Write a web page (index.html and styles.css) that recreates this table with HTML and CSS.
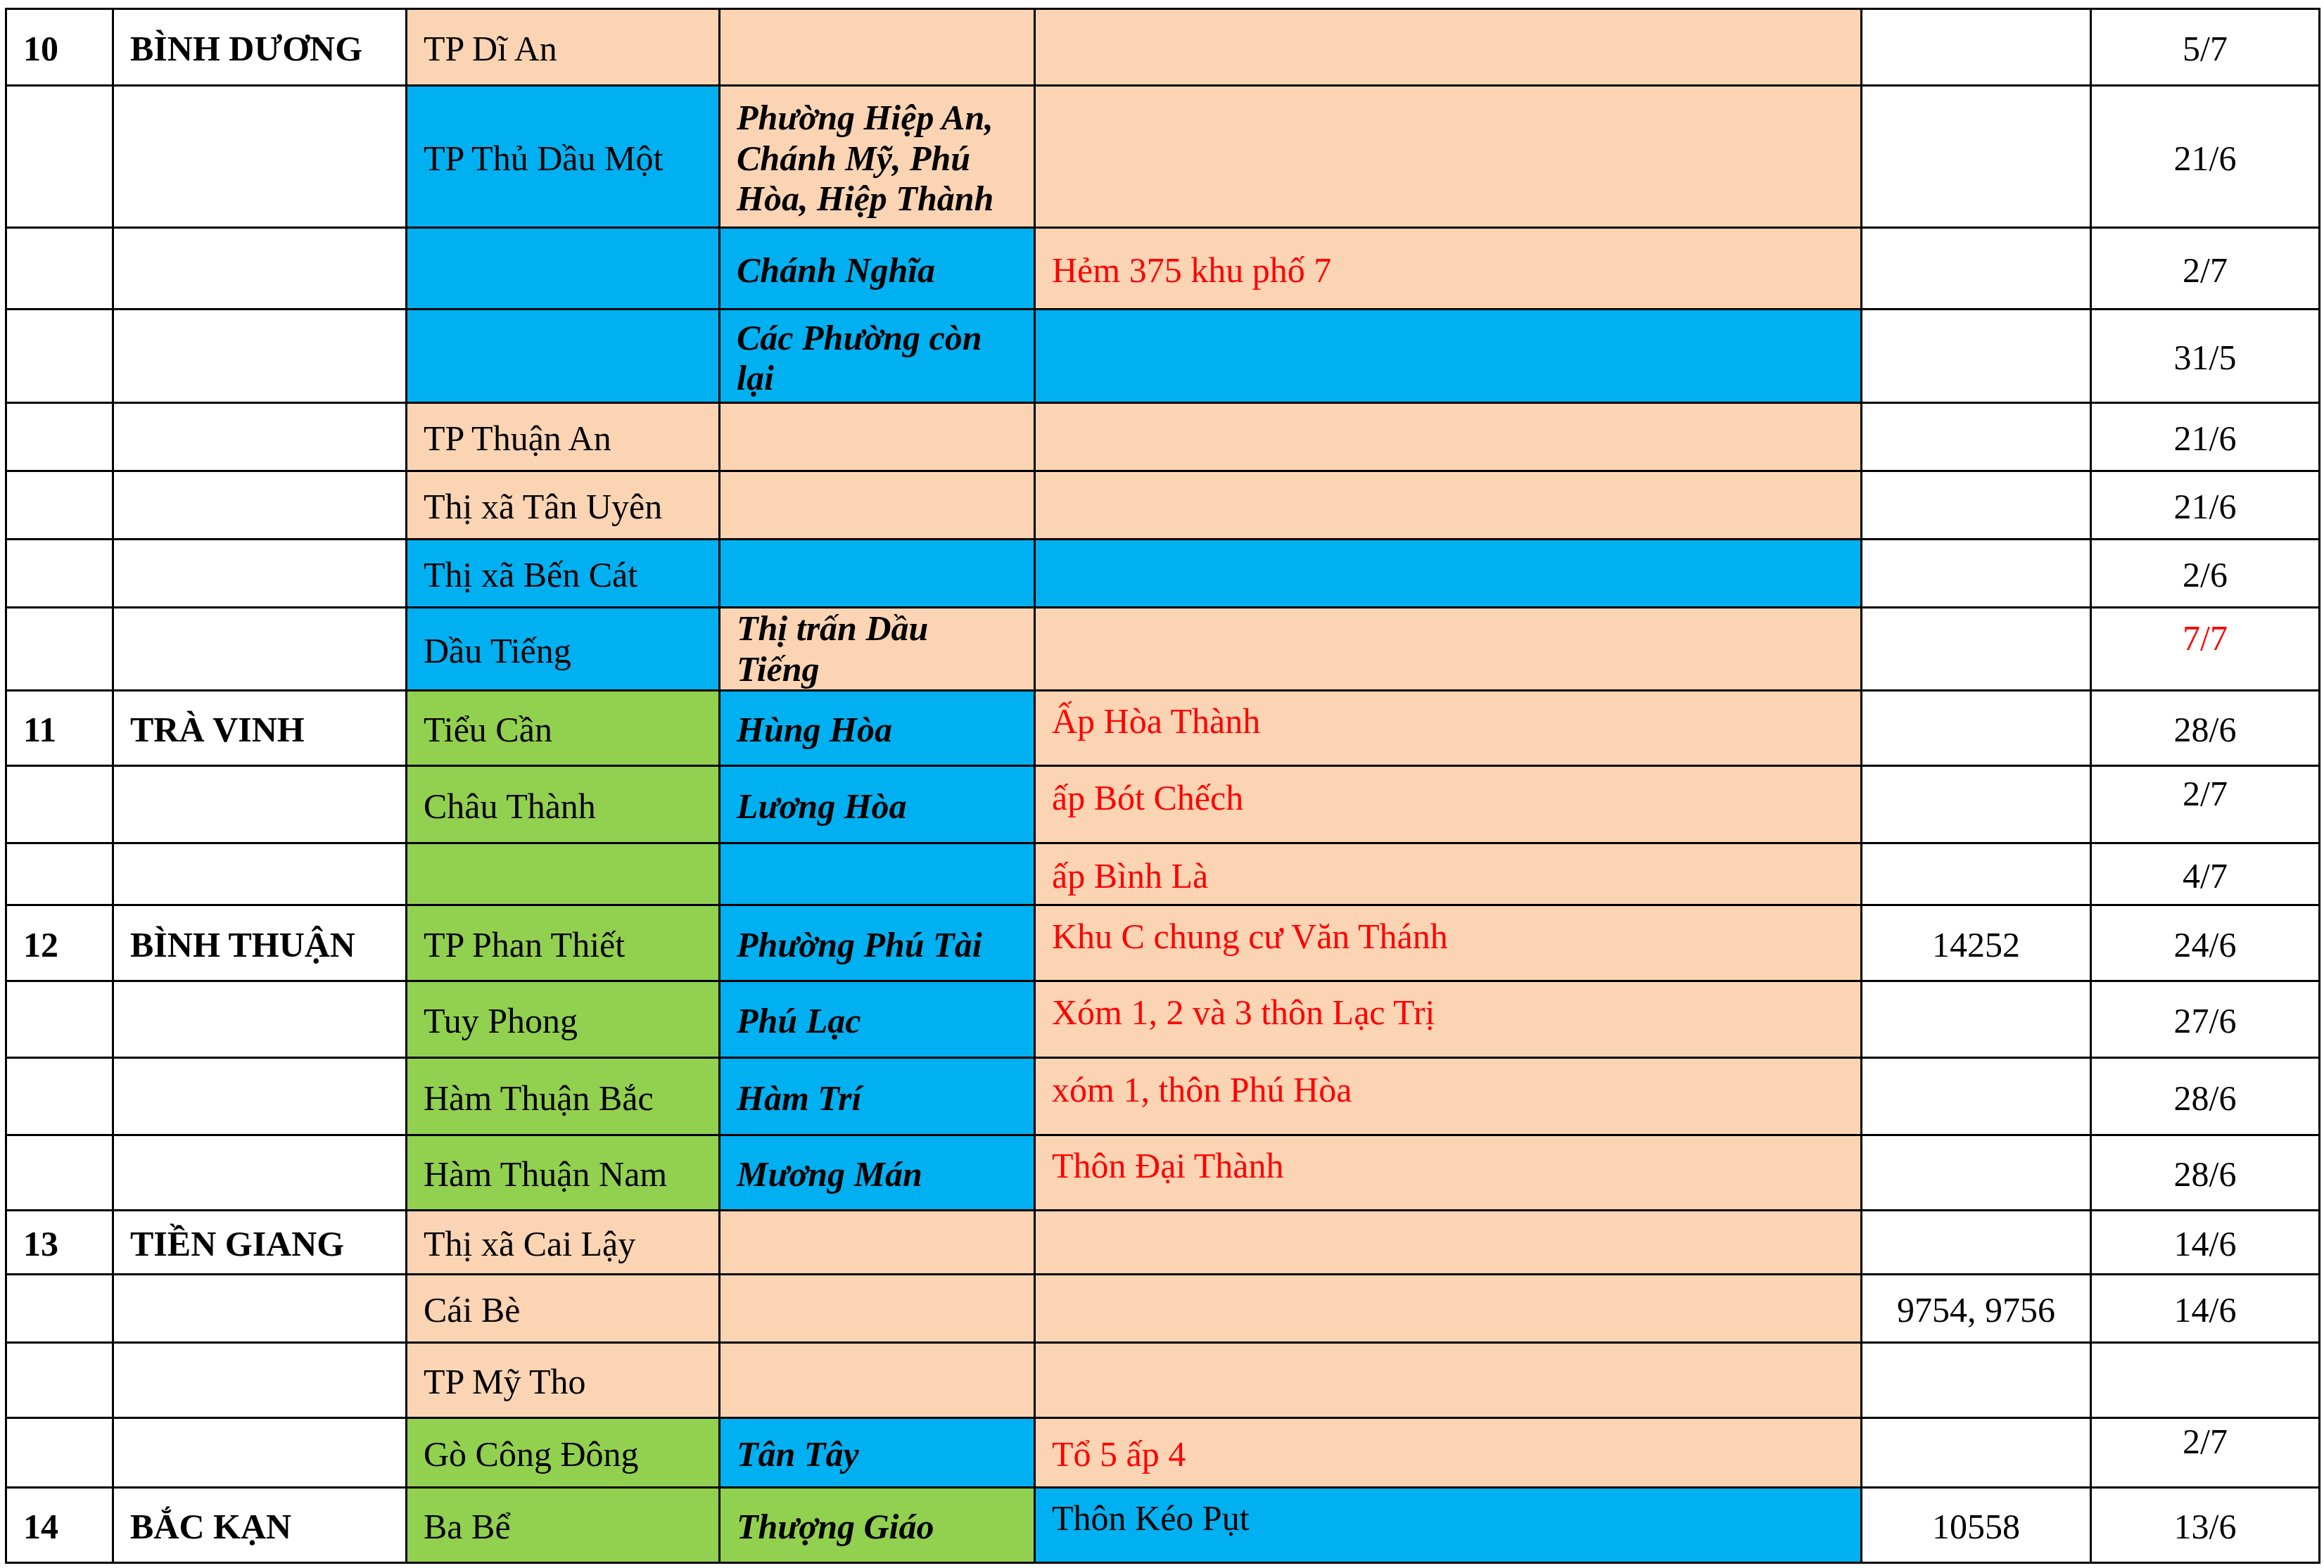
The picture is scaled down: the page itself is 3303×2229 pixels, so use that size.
FILE: index.html
```html
<!DOCTYPE html>
<html lang="vi">
<head>
<meta charset="utf-8">
<title>Bảng</title>
<link rel="stylesheet" href="styles.css">
</head>
<body>
<table class="grid">
  <colgroup>
    <col class="c1"><col class="c2"><col class="c3"><col class="c4"><col class="c5"><col class="c6"><col class="c7">
  </colgroup>
  <tbody>
    <tr class="h109">
      <td class="bd">10</td><td class="bd">BÌNH DƯƠNG</td>
      <td class="p">TP Dĩ An</td><td class="p"></td><td class="p"></td>
      <td class="c"></td><td class="c">5/7</td>
    </tr>
    <tr class="h202">
      <td></td><td></td>
      <td class="b">TP Thủ Dầu Một</td>
      <td class="p bi">Phường Hiệp An,<br>Chánh Mỹ, Phú<br>Hòa, Hiệp Thành</td>
      <td class="p"></td>
      <td class="c"></td><td class="c">21/6</td>
    </tr>
    <tr class="h116">
      <td></td><td></td>
      <td class="b"></td><td class="b bi">Chánh Nghĩa</td><td class="p red">Hẻm 375 khu phố 7</td>
      <td class="c"></td><td class="c">2/7</td>
    </tr>
    <tr class="h133">
      <td></td><td></td>
      <td class="b"></td><td class="b bi">Các Phường còn<br>lại</td><td class="b"></td>
      <td class="c"></td><td class="c">31/5</td>
    </tr>
    <tr class="h97">
      <td></td><td></td>
      <td class="p">TP Thuận An</td><td class="p"></td><td class="p"></td>
      <td class="c"></td><td class="c">21/6</td>
    </tr>
    <tr class="h97">
      <td></td><td></td>
      <td class="p">Thị xã Tân Uyên</td><td class="p"></td><td class="p"></td>
      <td class="c"></td><td class="c">21/6</td>
    </tr>
    <tr class="h97">
      <td></td><td></td>
      <td class="b">Thị xã Bến Cát</td><td class="b"></td><td class="b"></td>
      <td class="c"></td><td class="c">2/6</td>
    </tr>
    <tr class="h118">
      <td></td><td></td>
      <td class="b">Dầu Tiếng</td><td class="p bi tight">Thị trấn Dầu<br>Tiếng</td><td class="p"></td>
      <td class="c"></td><td class="c red lift2">7/7</td>
    </tr>
    <tr class="h107">
      <td class="bd">11</td><td class="bd">TRÀ VINH</td>
      <td class="g">Tiểu Cần</td><td class="b bi">Hùng Hòa</td><td class="p red lift1">Ấp Hòa Thành</td>
      <td class="c"></td><td class="c">28/6</td>
    </tr>
    <tr class="h110">
      <td></td><td></td>
      <td class="g">Châu Thành</td><td class="b bi">Lương Hòa</td><td class="p red lift1">ấp Bót Chếch</td>
      <td class="c"></td><td class="c lift2">2/7</td>
    </tr>
    <tr class="h88">
      <td></td><td></td>
      <td class="g"></td><td class="b"></td><td class="p red">ấp Bình Là</td>
      <td class="c"></td><td class="c">4/7</td>
    </tr>
    <tr class="h108">
      <td class="bd">12</td><td class="bd">BÌNH THUẬN</td>
      <td class="g">TP Phan Thiết</td><td class="b bi">Phường Phú Tài</td><td class="p red lift1">Khu C chung cư Văn Thánh</td>
      <td class="c">14252</td><td class="c">24/6</td>
    </tr>
    <tr class="h109">
      <td></td><td></td>
      <td class="g">Tuy Phong</td><td class="b bi">Phú Lạc</td><td class="p red lift1">Xóm 1, 2 và 3 thôn Lạc Trị</td>
      <td class="c"></td><td class="c">27/6</td>
    </tr>
    <tr class="h110">
      <td></td><td></td>
      <td class="g">Hàm Thuận Bắc</td><td class="b bi">Hàm Trí</td><td class="p red lift1">xóm 1, thôn Phú Hòa</td>
      <td class="c"></td><td class="c">28/6</td>
    </tr>
    <tr class="h107">
      <td></td><td></td>
      <td class="g">Hàm Thuận Nam</td><td class="b bi">Mương Mán</td><td class="p red lift1">Thôn Đại Thành</td>
      <td class="c"></td><td class="c">28/6</td>
    </tr>
    <tr class="h91">
      <td class="bd">13</td><td class="bd">TIỀN GIANG</td>
      <td class="p">Thị xã Cai Lậy</td><td class="p"></td><td class="p"></td>
      <td class="c"></td><td class="c">14/6</td>
    </tr>
    <tr class="h97">
      <td></td><td></td>
      <td class="p">Cái Bè</td><td class="p"></td><td class="p"></td>
      <td class="c">9754, 9756</td><td class="c">14/6</td>
    </tr>
    <tr class="h107">
      <td></td><td></td>
      <td class="p">TP Mỹ Tho</td><td class="p"></td><td class="p"></td>
      <td class="c"></td><td class="c"></td>
    </tr>
    <tr class="h99">
      <td></td><td></td>
      <td class="g">Gò Công Đông</td><td class="b bi">Tân Tây</td><td class="p red">Tổ 5 ấp 4</td>
      <td class="c"></td><td class="c lift2">2/7</td>
    </tr>
    <tr class="h107">
      <td class="bd">14</td><td class="bd">BẮC KẠN</td>
      <td class="g">Ba Bể</td><td class="g bi">Thượng Giáo</td><td class="b lift1">Thôn Kéo Pụt</td>
      <td class="c">10558</td><td class="c">13/6</td>
    </tr>
  </tbody>
</table>
</body>
</html>
```

FILE: styles.css
```css
html, body {
  background: #ffffff;
}
body {
  margin: 11px 0 0 7px;
  font-family: "Liberation Serif", "Times New Roman", serif;
  font-size: 50px;
  line-height: 1.15;
  color: #000000;
}
.grid {
  border-collapse: separate;
  border-spacing: 0;
  table-layout: fixed;
  width: 3291px;
  border-top: 3px solid #000;
  border-left: 3px solid #000;
}
.c1 { width: 152px; }
.c2 { width: 417px; }
.c3 { width: 445px; }
.c4 { width: 448px; }
.c5 { width: 1175px; }
.c6 { width: 326px; }
.c7 { width: 325px; }

.grid td {
  border-right: 3px solid #000;
  border-bottom: 3px solid #000;
  padding: 6px 23px 0 23px;
  vertical-align: middle;
  text-align: left;
  white-space: nowrap;
  overflow: hidden;
  background: #ffffff;
}
.grid td.c { text-align: center; padding-left: 4px; padding-right: 4px; }
.grid td.p { background: #fbd4b4; }
.grid td.b { background: #00b0f0; }
.grid td.g { background: #92d050; }
.bd { font-weight: bold; }
.bi { font-weight: bold; font-style: italic; }
.red { color: #ff0000; }
.grid td.lift1 { padding-top: 0; padding-bottom: 18px; }
.grid td.lift2 { padding-top: 0; padding-bottom: 30px; }
.grid td.tight { padding-top: 0; padding-bottom: 0; }

.h88 { height: 88px; }
.h91 { height: 91px; }
.h97 { height: 97px; }
.h99 { height: 99px; }
.h107 { height: 107px; }
.h108 { height: 108px; }
.h109 { height: 109px; }
.h110 { height: 110px; }
.h116 { height: 116px; }
.h118 { height: 118px; }
.h133 { height: 133px; }
.h202 { height: 202px; }
```
